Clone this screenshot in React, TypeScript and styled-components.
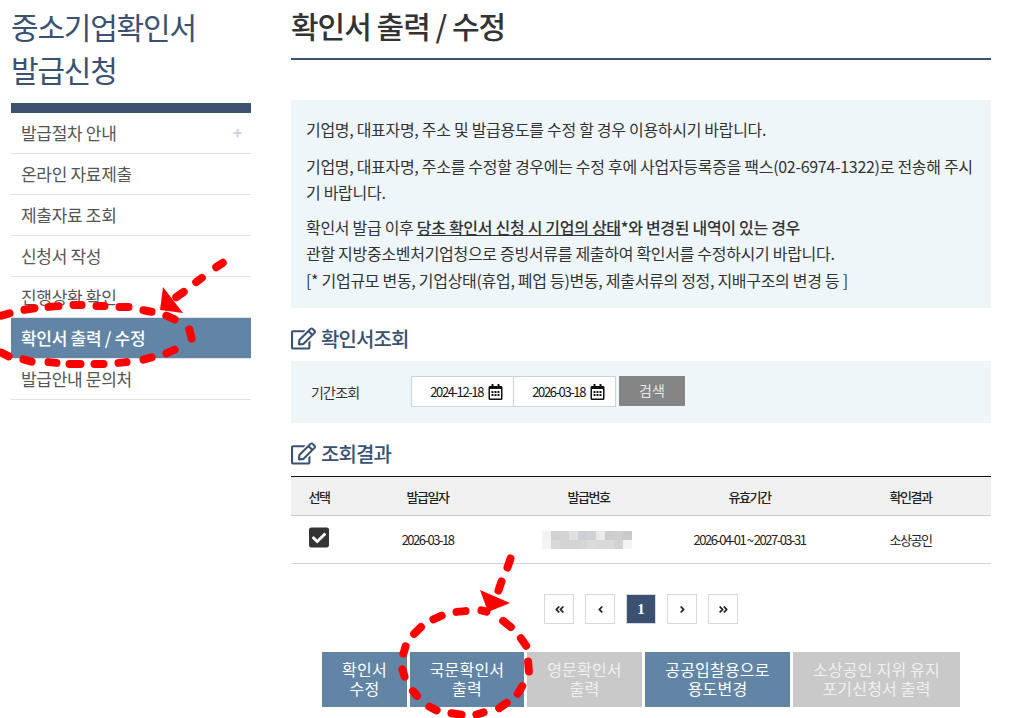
import React from "react";
import styled, { createGlobalStyle } from "styled-components";
import { FaRegEdit, FaRegCalendarAlt, FaCheckSquare, FaAngleDoubleLeft, FaAngleDoubleRight, FaAngleLeft, FaAngleRight } from "react-icons/fa";

const navy = "#3a5172";
const steel = "#6285a6";

const GlobalStyle = createGlobalStyle`
    html, body {
        margin: 0;
        padding: 0;
        height: 718px;
        overflow: hidden;
        background: #fff;
    }
    * {
        box-sizing: border-box;
    }
    body {
        font-family: "Noto Sans CJK KR", "Noto Sans", sans-serif;
        color: #333;
    }
`;

const Page = styled.div`
    position: relative;
    display: flex;
    gap: 40px;
    width: 1027px;
    height: 718px;
    padding-left: 11px;
    overflow: hidden;
`;

const Sidebar = styled.aside`
    width: 240px;
    flex: none;
`;

const SideTitle = styled.h1`
    margin: 5px 0 0;
    height: 98px;
    font-size: 30px;
    line-height: 43px;
    font-weight: 400;
    letter-spacing: -1.2px;
    color: ${navy};
`;

const SideMenu = styled.ul`
    margin: 0;
    padding: 0;
    list-style: none;
    border-top: 10px solid ${navy};
`;

const SideItem = styled.li<{ $active?: boolean }>`
    display: flex;
    justify-content: space-between;
    align-items: center;
    height: 41px;
    padding: 0 9px 2px 10px;
    font-size: 17px;
    letter-spacing: -0.3px;
    font-weight: ${(p) => (p.$active ? 500 : 400)};
    color: ${(p) => (p.$active ? "#fff" : "#555")};
    background: ${(p) => (p.$active ? steel : "transparent")};
    border-bottom: 1px solid #e2e2e2;
`;

const Plus = styled.span`
    font-size: 16px;
    font-weight: 700;
    color: #ccd2dc;
`;

const Main = styled.main`
    width: 700px;
    flex: none;
`;

const PageTitle = styled.h2`
    margin: 0 0 40px;
    height: 60px;
    padding-bottom: 8px;
    border-bottom: 2px solid ${navy};
    font-size: 30px;
    line-height: 50px;
    font-weight: 500;
    letter-spacing: -1px;
    color: #333;
`;

const InfoBox = styled.section`
    height: 208px;
    padding: 16px 15px 0;
    background: #eef6fa;
    font-size: 16px;
    letter-spacing: -0.3px;
    color: #333;
`;

const InfoText = styled.p<{ $gap?: number }>`
    margin: 0 0 ${(p) => p.$gap ?? 0}px;
    line-height: 26.5px;
`;

const Strong = styled.strong`
    font-weight: 500;
`;

const Underlined = styled.span`
    text-decoration: underline;
`;

const SectionTitle = styled.h3`
    display: flex;
    align-items: center;
    gap: 5px;
    margin: 0;
    height: 53px;
    padding-top: 8px;
    font-size: 20px;
    font-weight: 500;
    letter-spacing: -0.9px;
    color: ${navy};

    svg {
        width: 25px;
        height: 25px;
    }
`;

const SearchPanel = styled.section`
    display: flex;
    align-items: flex-start;
    height: 62px;
    padding: 15px 0 0 20px;
    background: #eef6fa;
`;

const SearchLabel = styled.span`
    width: 100px;
    line-height: 33px;
    font-size: 14px;
    letter-spacing: -0.8px;
    color: #333;
`;

const DateField = styled.div<{ $joined?: boolean }>`
    display: flex;
    align-items: center;
    justify-content: flex-end;
    gap: 5px;
    width: 103px;
    height: 31px;
    padding-right: 10px;
    margin-left: ${(p) => (p.$joined ? "-1px" : 0)};
    background: #fff;
    border: 1px solid #ccd3dc;
    font-size: 13px;
    letter-spacing: -1.4px;
    color: #111;

    svg {
        width: 15px;
        height: 16px;
        flex: none;
    }
`;

const SearchButton = styled.button`
    width: 66px;
    height: 30px;
    margin-left: 3px;
    padding: 0 0 2px;
    border: 0;
    background: #858585;
    color: #e6e6e6;
    font: inherit;
    font-size: 14px;
`;

const ResultGrid = styled.div`
    display: grid;
    grid-template-columns: 56px repeat(4, 1fr);
    text-align: center;
    font-size: 13px;
    letter-spacing: -1.5px;
    color: #222;
`;

const HeadCell = styled.div`
    display: flex;
    align-items: center;
    justify-content: center;
    height: 40px;
    background: #f0f0f0;
    border-top: 1px solid #111;
    border-bottom: 1px solid #ccc;
    font-weight: 500;
`;

const BodyCell = styled.div`
    display: flex;
    align-items: center;
    justify-content: center;
    height: 48px;
    border-bottom: 1px solid #d5d5d5;
`;

const CheckIcon = styled(FaCheckSquare)`
    width: 20px;
    height: 23px;
    margin-top: -5px;
    color: #333;
`;

const Pager = styled.nav`
    display: flex;
    justify-content: center;
    gap: 11px;
    margin-top: 30px;
`;

const PageBox = styled.span<{ $current?: boolean }>`
    display: flex;
    align-items: center;
    justify-content: center;
    width: 30px;
    height: 30px;
    border: 1px solid #d8d8d8;
    background: ${(p) => (p.$current ? navy : "#fff")};
    color: ${(p) => (p.$current ? "#fff" : "#222")};
    font-family: "Liberation Serif", serif;
    font-size: 15px;
    font-weight: 700;

    svg {
        width: 11px;
        height: 11px;
    }
`;

const ActionRow = styled.div`
    display: flex;
    justify-content: center;
    gap: 3px;
    margin-top: 28px;
`;

const ActionButton = styled.button<{ $w: number; $off?: boolean }>`
    width: ${(p) => p.$w}px;
    height: 55px;
    padding: 0 0 1px;
    border: 0;
    background: ${(p) => (p.$off ? "#c9c9c9" : steel)};
    color: ${(p) => (p.$off ? "#f0f0f0" : "#fff")};
    font: inherit;
    font-size: 16px;
    line-height: 19px;
    letter-spacing: 0.2px;
`;

const Overlay = styled.svg`
    position: absolute;
    left: 0;
    top: 0;
    width: 1027px;
    height: 718px;
    pointer-events: none;
`;

const Dash = styled.line`
    stroke: #f00;
    stroke-width: 8;
    stroke-linecap: round;
`;

const Mosaic = styled.svg`
    display: block;
    width: 90px;
    height: 18px;
    margin-right: 4px;
`;

const sideMenu = ["발급절차 안내", "온라인 자료제출", "제출자료 조회", "신청서 작성", "진행상황 확인", "확인서 출력 / 수정", "발급안내 문의처"];
const heads = ["선택", "발급일자", "발급번호", "유효기간", "확인결과"];

const mosaicTop = ["#f2f2f2", "#d2d2d2", "#d6d4d2", "#e0e0de", "#ccd0d4", "#d2d2d2", "#e8eaec", "#cdcdcd", "#d0cece", "#cacaca"];
const mosaicLow = ["#f4f4f4", "#d8d8d8", "#d4d4d4", "#d4d4d4", "#d6d6d6", "#d8dcde", "#d6dadd", "#d8dadc", "#d2d2d2", "#f4f4f4"];

// hand-traced from the red marker strokes: x1, y1, x2, y2 (outer ends of each dash)
const upperDashes = [
    [0, 316, 11, 313], [23, 310, 36, 308], [47, 307, 60, 306], [72, 305, 83, 305], [95, 306, 106, 306],
    [118, 307, 130, 307], [142, 310, 153, 312], [165, 315, 176, 320], [189, 328, 192, 340], [176, 349, 165, 354],
    [153, 357, 142, 360], [128, 362, 117, 363], [105, 364, 93, 364], [82, 364, 68, 364], [58, 363, 47, 362],
    [33, 362, 22, 359], [10, 357, 0, 352],
    [224, 262, 215, 268], [203, 277, 195, 283], [185, 291, 175, 298],
];

const lowerDashes = [
    [511, 557, 507, 569], [502, 580, 498, 592],
    [488, 612, 480, 610], [502, 620, 512, 628], [520, 637, 527, 647], [528, 660, 529, 673], [523, 685, 517, 695],
    [508, 702, 498, 709], [485, 712, 475, 715], [463, 715, 450, 713], [438, 711, 428, 706], [418, 697, 412, 690],
    [405, 678, 402, 668], [403, 655, 406, 645], [413, 635, 422, 626], [432, 620, 443, 615], [455, 612, 467, 611],
];

// caps add half a stroke at each end, so pull the ends in a little
const trimDash = (d: number[], cap = 1.5) => {
    const len = Math.hypot(d[2] - d[0], d[3] - d[1]);
    const ux = ((d[2] - d[0]) / len) * cap;
    const uy = ((d[3] - d[1]) / len) * cap;
    return { x1: d[0] + ux, y1: d[1] + uy, x2: d[2] - ux, y2: d[3] - uy };
};

const App = () => {
    return (
        <Page>
            <GlobalStyle />
            <Sidebar>
                <SideTitle>중소기업확인서<br />발급신청</SideTitle>
                <SideMenu>
                    {sideMenu.map((label, i) => (
                        <SideItem key={label} $active={i === 5}>
                            {label}
                            {i === 0 && <Plus>+</Plus>}
                        </SideItem>
                    ))}
                </SideMenu>
            </Sidebar>
            <Main>
                <PageTitle>확인서 출력 / 수정</PageTitle>
                <InfoBox>
                    <InfoText $gap={10}>기업명, 대표자명, 주소 및 발급용도를 수정 할 경우 이용하시기 바랍니다.</InfoText>
                    <InfoText $gap={8}>기업명, 대표자명, 주소를 수정할 경우에는 수정 후에 사업자등록증을 팩스(02-6974-1322)로 전송해 주시기 바랍니다.</InfoText>
                    <InfoText>
                        확인서 발급 이후 <Strong><Underlined>당초 확인서 신청 시 기업의 상태</Underlined>*와 변경된 내역이 있는 경우</Strong>
                        <br />
                        관할 지방중소벤처기업청으로 증빙서류를 제출하여 확인서를 수정하시기 바랍니다.
                        <br />
                        [* 기업규모 변동, 기업상태(휴업, 폐업 등)변동, 제출서류의 정정, 지배구조의 변경 등 ]
                    </InfoText>
                </InfoBox>
                <SectionTitle><FaRegEdit />확인서조회</SectionTitle>
                <SearchPanel>
                    <SearchLabel>기간조회</SearchLabel>
                    <DateField>2024-12-18<FaRegCalendarAlt /></DateField>
                    <DateField $joined>2026-03-18<FaRegCalendarAlt /></DateField>
                    <SearchButton>검색</SearchButton>
                </SearchPanel>
                <SectionTitle><FaRegEdit />조회결과</SectionTitle>
                <ResultGrid>
                    {heads.map((h) => <HeadCell key={h}>{h}</HeadCell>)}
                    <BodyCell><CheckIcon /></BodyCell>
                    <BodyCell>2026-03-18</BodyCell>
                    <BodyCell>
                        <Mosaic viewBox="0 0 90 18">
                            {mosaicTop.map((c, i) => <rect key={i} x={i * 9} y="0" width="9" height="9" fill={c} />)}
                            {mosaicLow.map((c, i) => <rect key={i} x={i * 9} y="9" width="9" height="9" fill={c} />)}
                        </Mosaic>
                    </BodyCell>
                    <BodyCell>2026-04-01 ~ 2027-03-31</BodyCell>
                    <BodyCell>소상공인</BodyCell>
                </ResultGrid>
                <Pager>
                    <PageBox><FaAngleDoubleLeft /></PageBox>
                    <PageBox><FaAngleLeft /></PageBox>
                    <PageBox $current>1</PageBox>
                    <PageBox><FaAngleRight /></PageBox>
                    <PageBox><FaAngleDoubleRight /></PageBox>
                </Pager>
                <ActionRow>
                    <ActionButton $w={85}>확인서<br />수정</ActionButton>
                    <ActionButton $w={114}>국문확인서<br />출력</ActionButton>
                    <ActionButton $w={115} $off>영문확인서<br />출력</ActionButton>
                    <ActionButton $w={145}>공공입찰용으로<br />용도변경</ActionButton>
                    <ActionButton $w={167} $off>소상공인 지위 유지<br />포기신청서 출력</ActionButton>
                </ActionRow>
            </Main>
            <Overlay viewBox="0 0 1027 718">
                {[...upperDashes, ...lowerDashes].map((d, i) => (
                    <Dash key={i} {...trimDash(d)} />
                ))}
                <polygon points="163,287 160,310 183,313" fill="#f00" />
                <polygon points="480,590 510,603 488,612" fill="#f00" />
            </Overlay>
        </Page>
    );
};

export default App;
